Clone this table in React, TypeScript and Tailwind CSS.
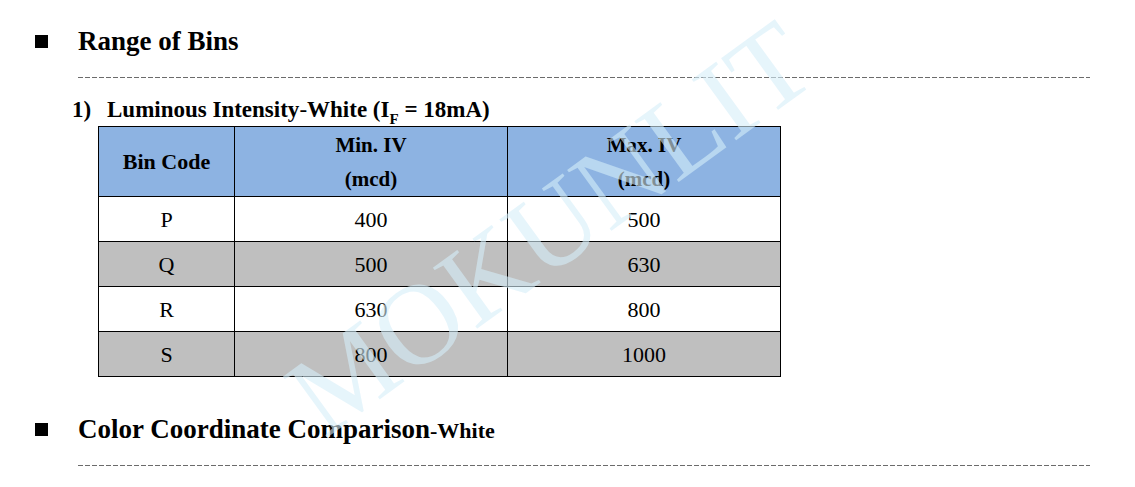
import React from 'react';

const rows = [
  { code: 'P', min: '400', max: '500', shaded: false },
  { code: 'Q', min: '500', max: '630', shaded: true },
  { code: 'R', min: '630', max: '800', shaded: false },
  { code: 'S', min: '800', max: '1000', shaded: true },
];

const Dashes = () => (
  <div className="ml-[78px] w-[1012px] h-px bg-[repeating-linear-gradient(90deg,#6b6b6b_0_5px,transparent_5px_7px)]" />
);

const SectionTitle = ({ children }: { children: React.ReactNode }) => (
  <div className="flex items-center pl-[35px] h-[30px]">
    <span className="w-[13px] h-[13px] bg-black mr-[30px]" />
    <h2 className="font-['Liberation_Serif','Times_New_Roman',serif] text-[27px] font-bold text-black leading-none">
      {children}
    </h2>
  </div>
);

export default function App() {
  return (
    <div className="relative w-full h-[487px] bg-white overflow-hidden text-black font-['Liberation_Serif','Times_New_Roman',serif]">
      <div className="pt-[26px]">
        <SectionTitle>Range of Bins</SectionTitle>
        <div className="mt-[21px]">
          <Dashes />
        </div>

        <div className="pl-[72px] mt-[19px] flex items-baseline text-[23px] font-bold leading-[26px]">
          <span className="w-[35px]">1)</span>
          <span>
            Luminous Intensity<span className="font-normal">-</span>White (I
            <sub className="text-[15px] align-[-3px]">F</sub> = 18mA)
          </span>
        </div>

        <table className="ml-[98px] mt-[3px] border-collapse text-center">
          <thead>
            <tr className="bg-[#8db3e2] h-[70px]">
              <th className="w-[136px] border border-black text-[22px] font-bold">Bin Code</th>
              <th className="w-[273px] border border-black text-[21px] font-bold leading-[34px]">
                Min. IV<br />(mcd)
              </th>
              <th className="w-[273px] border border-black text-[21px] font-bold leading-[34px]">
                Max. IV<br />(mcd)
              </th>
            </tr>
          </thead>
          <tbody>
            {rows.map((r) => (
              <tr key={r.code} className={r.shaded ? 'h-[45px] bg-[#bfbfbf]' : 'h-[45px] bg-white'}>
                <td className="border border-black text-[22px]">{r.code}</td>
                <td className="border border-black text-[22px]">{r.min}</td>
                <td className="border border-black text-[22px]">{r.max}</td>
              </tr>
            ))}
          </tbody>
        </table>

        <div className="mt-[37px]">
          <SectionTitle>
            Color Coordinate Comparison<span className="text-[22px]">-White</span>
          </SectionTitle>
        </div>
        <div className="mt-[21px]">
          <Dashes />
        </div>
      </div>

      {/* watermark */}
      <div className="pointer-events-none absolute left-[550px] top-[228px] -translate-x-1/2 -translate-y-1/2 -rotate-[36deg] text-[115px] leading-none text-[#d6effa] opacity-60 whitespace-nowrap">
        MOKUNLIT
      </div>
    </div>
  );
}
